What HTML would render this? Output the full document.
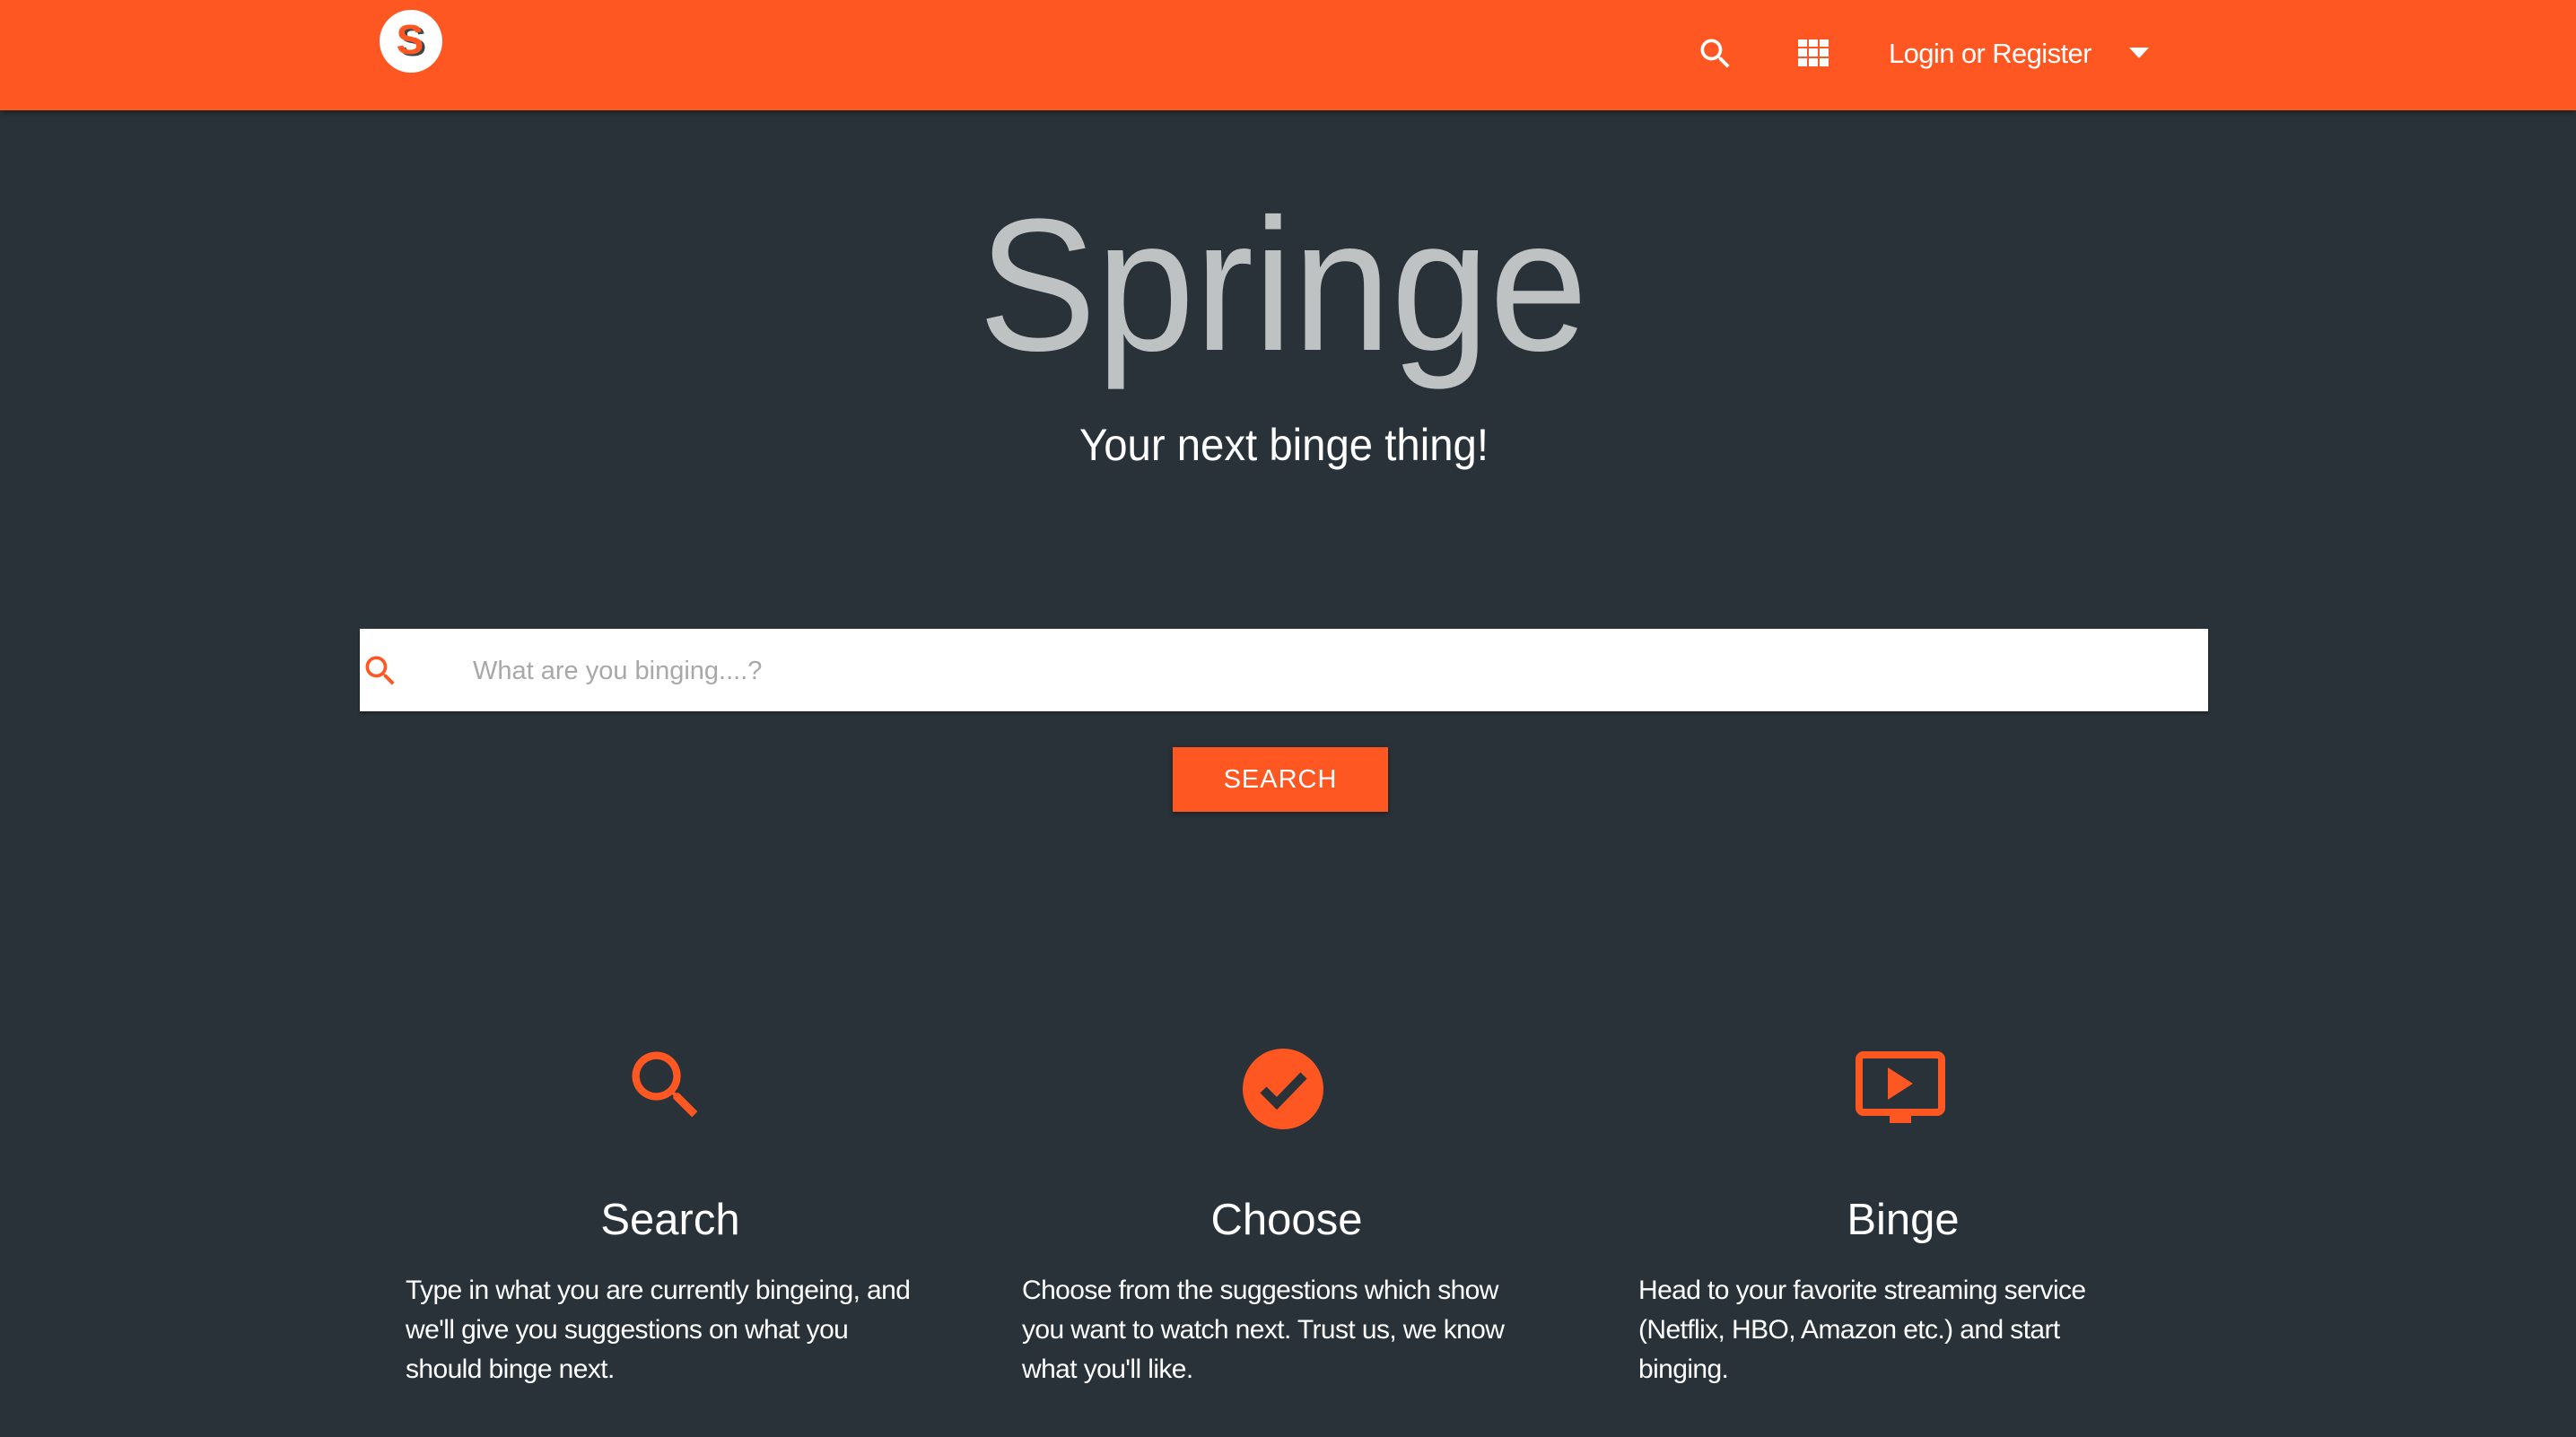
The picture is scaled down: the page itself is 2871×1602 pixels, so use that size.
<!DOCTYPE html>
<html><head><meta charset="utf-8"><style>
html,body{margin:0;padding:0;}
body{width:2871px;height:1602px;background:#283238;position:relative;overflow:hidden;font-family:"Liberation Sans",sans-serif;color:#fff;}
.hdr{position:absolute;left:0;top:0;width:2871px;height:123px;background:#ff5722;box-shadow:0 2px 6px rgba(0,0,0,.4);}
.abs{position:absolute;}
.col{position:absolute;top:1320px;width:590px;}
.col h2{margin:0;font-weight:normal;font-size:49px;text-align:center;height:80px;line-height:80px;}
.col p{margin:17px 0 0 0;font-size:30px;line-height:44px;letter-spacing:-0.6px;white-space:nowrap;}
</style></head><body>
<div class="hdr">
  <svg class="abs" style="left:422px;top:10px" width="72" height="72" viewBox="0 0 72 72">
    <circle cx="36" cy="36" r="35" fill="#fff"/>
    <text x="38" y="52" font-family="Liberation Sans" font-size="46" font-weight="bold" fill="#37474f" text-anchor="middle">S</text>
    <text x="35" y="50" font-family="Liberation Sans" font-size="46" font-weight="bold" fill="#ff5722" text-anchor="middle">S</text>
  </svg>
  <svg class="abs" style="left:1890px;top:38px" width="44" height="44" viewBox="0 0 24 24"><path fill="#fff" d="M15.5 14h-.79l-.28-.27A6.47 6.47 0 0 0 16 9.5 6.5 6.5 0 1 0 9.5 16c1.61 0 3.09-.59 4.23-1.57l.27.28v.79l5 4.99L20.49 19l-4.99-5zm-6 0C7.01 14 5 11.99 5 9.5S7.01 5 9.5 5 14 7.01 14 9.5 11.99 14 9.5 14z"/></svg>
  <svg class="abs" style="left:2004px;top:44px" width="34" height="30" viewBox="0 0 34 30"><g fill="#fff"><rect x="0" y="0" width="10" height="8"/><rect x="12" y="0" width="10" height="8"/><rect x="24" y="0" width="10" height="8"/><rect x="0" y="10" width="10" height="9"/><rect x="12" y="10" width="10" height="9"/><rect x="24" y="10" width="10" height="9"/><rect x="0" y="21" width="10" height="9"/><rect x="12" y="21" width="10" height="9"/><rect x="24" y="21" width="10" height="9"/></g></svg>
  <div class="abs" style="left:2105px;top:38px;font-size:31px;line-height:44px;white-space:nowrap;letter-spacing:-0.6px">Login or Register</div>
  <svg class="abs" style="left:2373px;top:53px" width="22" height="12" viewBox="0 0 22 12"><path d="M0 0h22L11 12z" fill="#fff"/></svg>
</div>
<svg class="abs" style="left:0;top:200px" width="2871" height="340">
  <text x="1430" y="190" font-family="Liberation Sans" font-size="210" fill="#fff" fill-opacity="0.7" text-anchor="middle" textLength="679" lengthAdjust="spacingAndGlyphs">Springe</text>
  <text x="1431" y="313" font-family="Liberation Sans" font-size="50" fill="#fff" text-anchor="middle" textLength="456" lengthAdjust="spacingAndGlyphs">Your next binge thing!</text>
</svg>
<div class="abs" style="left:401px;top:701px;width:2060px;height:92px;background:#fff;box-shadow:0 2px 3px rgba(0,0,0,.3)"></div>
<svg class="abs" style="left:402px;top:726px" width="44" height="44" viewBox="0 0 24 24"><path fill="#ff5722" d="M15.5 14h-.79l-.28-.27A6.47 6.47 0 0 0 16 9.5 6.5 6.5 0 1 0 9.5 16c1.61 0 3.09-.59 4.23-1.57l.27.28v.79l5 4.99L20.49 19l-4.99-5zm-6 0C7.01 14 5 11.99 5 9.5S7.01 5 9.5 5 14 7.01 14 9.5 11.99 14 9.5 14z"/></svg>
<div class="abs" style="left:527px;top:726px;font-size:29px;line-height:44px;color:#a8a8a8">What are you binging....?</div>
<div class="abs" style="left:1307px;top:833px;width:240px;height:72px;background:#ff5722;box-shadow:0 2px 5px rgba(0,0,0,.35);font-size:29px;line-height:72px;text-align:center;letter-spacing:1px">SEARCH</div>
<svg class="abs" style="left:692px;top:1160px" width="100" height="100" viewBox="0 0 24 24"><path fill="#ff5722" d="M15.5 14h-.79l-.28-.27A6.47 6.47 0 0 0 16 9.5 6.5 6.5 0 1 0 9.5 16c1.61 0 3.09-.59 4.23-1.57l.27.28v.79l5 4.99L20.49 19l-4.99-5zm-6 0C7.01 14 5 11.99 5 9.5S7.01 5 9.5 5 14 7.01 14 9.5 11.99 14 9.5 14z"/></svg>
<svg class="abs" style="left:1384px;top:1168px" width="92" height="92" viewBox="0 0 92 92"><circle cx="46" cy="46" r="45" fill="#ff5722"/><path d="M24 47l15 15 30-31" stroke="#283238" stroke-width="10" fill="none"/></svg>
<svg class="abs" style="left:2068px;top:1172px" width="100" height="86" viewBox="0 0 100 86"><rect x="4" y="4" width="92" height="64" rx="5" fill="none" stroke="#ff5722" stroke-width="8"/><path d="M36 18v36l28-18z" fill="#ff5722"/><rect x="38" y="68" width="24" height="12" fill="#ff5722"/></svg>
<div class="col" style="left:452px"><h2 style="margin-left:-55px;margin-right:-55px">Search</h2><p>Type in what you are currently bingeing, and<br>we'll give you suggestions on what you<br>should binge next.</p></div>
<div class="col" style="left:1139px"><h2 style="margin-left:-55px;margin-right:-55px">Choose</h2><p>Choose from the suggestions which show<br>you want to watch next. Trust us, we know<br>what you'll like.</p></div>
<div class="col" style="left:1826px"><h2 style="margin-left:-55px;margin-right:-55px">Binge</h2><p>Head to your favorite streaming service<br>(Netflix, HBO, Amazon etc.) and start<br>binging.</p></div>
</body></html>
